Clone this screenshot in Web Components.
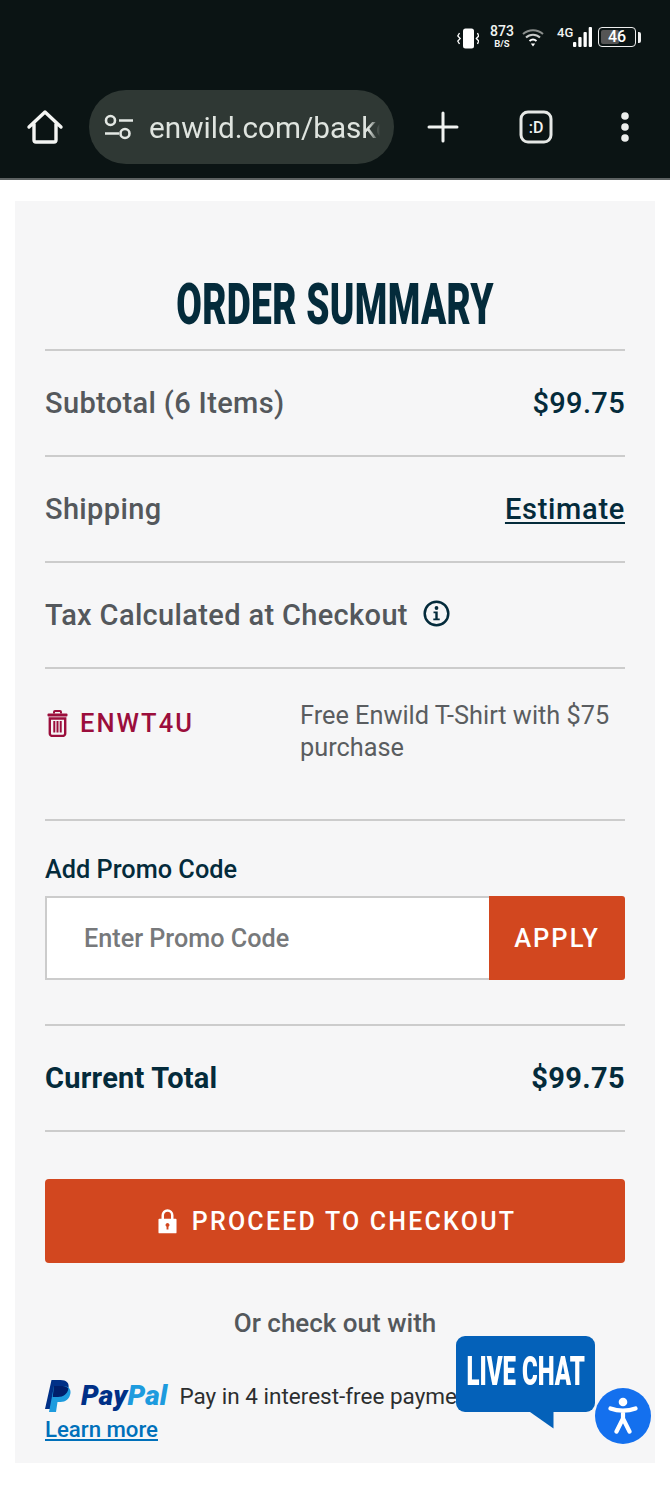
<!DOCTYPE html>
<html lang="en">
<head>
<meta charset="utf-8">
<title>Order summary</title>
<style>
  html, body { margin: 0; background: #fff; }
  body { height: 1500px; position: relative; overflow: hidden; font-family: Roboto, "Liberation Sans", sans-serif; }
</style>
</head>
<body>
<browser-bar url="enwild.com/basket"></browser-bar>
<order-summary>
  <summary-row label="Subtotal (6 Items)" value="$99.75"></summary-row>
  <summary-row label="Shipping" value="Estimate" link></summary-row>
  <summary-row label="Tax Calculated at Checkout" info></summary-row>
  <promo-applied code="ENWT4U">Free Enwild T-Shirt with $75 purchase</promo-applied>
  <promo-form></promo-form>
  <summary-row label="Current Total" value="$99.75" total></summary-row>
  <checkout-block></checkout-block>
</order-summary>
<chat-widgets></chat-widgets>

<script>
'use strict'

// browser chrome + android status bar
customElements.define('browser-bar', class extends HTMLElement {
  connectedCallback() {
    this.attachShadow({ mode: 'open' }).innerHTML = `
      <style>
        :host { display: block; height: 180px; box-sizing: border-box; background: #0b1414; border-bottom: 2px solid #5d6262; color: #f1f3f1; font-family: Roboto, sans-serif; }
        .status { height: 73px; display: flex; align-items: flex-start; justify-content: flex-end; padding: 26px 29px 0 0; box-sizing: border-box; }
        .status svg { display: block; flex: none; }
        .speed { width: 24px; margin-left: 11px; text-align: center; font-weight: 500; line-height: 11px; font-size: 14px; }
        .speed small { display: block; font-size: 9.500px; font-weight: 700; margin-top: 2px; line-height: 9px; }
        .net { width: 16px; margin: 1px 0 0 13px; font-size: 13px; line-height: 11px; font-weight: 500; }
        .batt { position: relative; width: 38px; height: 20px; margin: 1px 0 0 6px; border: 1.500px solid #eee; border-radius: 4px; box-sizing: border-box; padding: 2px; }
        .batt i { display: block; height: 100%; width: 55%; background: #555; border-radius: 2px; }
        .batt b { position: absolute; inset: 0; text-align: center; font-size: 16px; line-height: 17px; font-weight: 500; color: #fff; }
        .cap { width: 3px; height: 11px; margin: 6px 0 0 2px; background: #eee; border-radius: 0 2px 2px 0; }
        .tools { height: 105px; display: flex; align-items: center; padding: 2px 0 0 26px; box-sizing: border-box; }
        .pill { width: 305px; height: 74px; margin-left: 25px; background: #2f3834; border-radius: 37px; display: flex; align-items: center; padding-left: 15px; box-sizing: border-box; }
        .url { width: 231px; margin: 1px 0 0 15px; overflow: hidden; white-space: nowrap; font-size: 29.700px; color: #dfe4df;
               -webkit-mask-image: linear-gradient(90deg, #000 95%, transparent 100%); mask-image: linear-gradient(90deg, #000 95%, transparent 100%); }
        .tools > svg { flex: none; display: block; }
      </style>
      <div class="status">
        <svg width="22" height="21" viewBox="0 0 22 21" style="margin-top:2px"><rect x="6" y="0.500" width="11" height="20" rx="2.500" fill="#fff"/><path d="M2.500 5 .8 8l2.400 2.500L.8 13l1.700 3M20.500 5l1.200 3-2.400 2.500 2.400 2.500-1.200 3" fill="none" stroke="#fff" stroke-width="1.300"/></svg>
        <div class="speed">873<small>B/S</small></div>
        <svg width="22" height="19" viewBox="0 0 22 19" style="margin:2px 0 0 8px"><path d="M1 6a15 15 0 0 1 20 0" fill="none" stroke="#8b8f8d" stroke-width="2"/><path d="M4 9.500a10 10 0 0 1 14 0" fill="none" stroke="#c9cbca" stroke-width="2"/><path d="M7.500 13a5.500 5.500 0 0 1 7 0" fill="none" stroke="#fff" stroke-width="2"/><path d="M8.800 15.500h4.400L11 18.500z" fill="#fff"/></svg>
        <div class="net">4G</div>
        <svg width="19" height="20" viewBox="0 0 19 20" style="margin-top:1px"><g fill="#fff"><rect x="0" y="15" width="3.300" height="5" rx="1"/><rect x="5.300" y="10" width="3.300" height="10" rx="1"/><rect x="10.500" y="5" width="3.300" height="15" rx="1"/><rect x="15.700" y="0" width="3.300" height="20" rx="1"/></g></svg>
        <div class="batt"><i></i><b>46</b></div>
        <div class="cap"></div>
      </div>
      <div class="tools">
        <svg width="38" height="38" viewBox="0 0 38 38"><path d="M3 19 19 4l16 15M8 16v16a2 2 0 0 0 2 2h18a2 2 0 0 0 2-2V16" fill="none" stroke="#f4f5f3" stroke-width="3.400" stroke-linecap="round" stroke-linejoin="round"/></svg>
        <div class="pill">
          <svg width="30" height="26" viewBox="0 0 30 26" style="flex:none"><g fill="none" stroke="#e4e8e4" stroke-width="2.600"><circle cx="6.500" cy="6.500" r="4.500"/><circle cx="21" cy="19.500" r="4.500"/><path d="M15 6.500h14M1 19.500h14"/></g></svg>
          <div class="url">${this.getAttribute('url')}</div>
        </div>
        <svg width="32" height="32" viewBox="0 0 32 32" style="margin-left:33px"><path d="M16 2v28M2 16h28" stroke="#f1f3f1" stroke-width="3" stroke-linecap="round"/></svg>
        <svg width="34" height="34" viewBox="0 0 34 34" style="margin-left:60px"><rect x="2" y="2" width="30" height="30" rx="7" fill="none" stroke="#e6e8e6" stroke-width="3"/><text x="17" y="23" text-anchor="middle" fill="#f1f3f1" font-family="Roboto" font-size="16" font-weight="500">:D</text></svg>
        <svg width="10" height="32" viewBox="0 0 10 32" style="margin-left:67px"><g fill="#eceeec"><circle cx="5" cy="5" r="3.800"/><circle cx="5" cy="16" r="3.800"/><circle cx="5" cy="27" r="3.800"/></g></svg>
      </div>`
  }
})

// grey card with the heading
const orderSummary = document.createElement('template')
orderSummary.innerHTML = `
  <style>
    :host { display: block; margin: 21px 15px 0; height: 1262px; padding: 0 30px; box-sizing: border-box; background: #f6f6f7; overflow: hidden; }
    h2 { margin: 0; height: 150px; box-sizing: border-box; padding-top: 73px; border-bottom: 2px solid #ccc; text-align: center; color: #042b3b;
         font: 900 58px/60px Roboto, sans-serif; white-space: nowrap; }
    /* no Oswald here, squeeze roboto to get the condensed look */
    h2 span { display: inline-block; transform: scaleX(.64); margin: 0 -100px; letter-spacing: .5px; }
  </style>
  <h2><span>ORDER SUMMARY</span></h2>
  <slot></slot>`
customElements.define('order-summary', class extends HTMLElement {
  constructor() {
    super()
    this.attachShadow({ mode: 'open' }).appendChild(orderSummary.content.cloneNode(true))
  }
})

customElements.define('summary-row', class extends HTMLElement {
  connectedCallback() {
    const value = this.getAttribute('value')
    const isLink = this.hasAttribute('link')
    this.attachShadow({ mode: 'open' }).innerHTML = `
      <style>
        :host { display: flex; height: 106px; box-sizing: border-box; border-bottom: 2px solid #ccc; align-items: center; justify-content: space-between;
                font: 500 29px/36px Roboto, sans-serif; letter-spacing: .35px; color: #54585c; }
        :host([total]) { color: #042b3b; font-weight: 700; letter-spacing: .25px; }
        .val { color: #042b3b; font-weight: 500; }
        :host([total]) .val { font-weight: 700; letter-spacing: .35px; }
        a { color: #042b3b; text-decoration: underline; text-underline-offset: 3px; letter-spacing: .7px; }
        .label { display: flex; align-items: center; gap: 15px; }
        svg { display: block; }
      </style>
      <div class="label">${this.getAttribute('label')}${this.hasAttribute('info') ? `
        <svg width="27" height="27" viewBox="0 0 27 27" style="margin-top:-4px"><circle cx="13.500" cy="13.500" r="11.800" fill="none" stroke="#042b3b" stroke-width="2.500"/><circle cx="13.500" cy="8" r="1.900" fill="#042b3b"/><path d="M10.500 11.500h4.200v7h2v1.800h-6.400v-1.800h2v-5.200h-1.800z" fill="#042b3b"/></svg>` : ''}</div>
      ${value ? `<div class="val">${isLink ? `<a href="#">${value}</a>` : value}</div>` : ''}`
  }
})

customElements.define('promo-applied', class extends HTMLElement {
  connectedCallback() {
    this.attachShadow({ mode: 'open' }).innerHTML = `
      <style>
        :host { display: grid; grid-template-columns: 255px 1fr; height: 152px; box-sizing: border-box; border-bottom: 2px solid #ccc; padding-top: 30px; font-family: Roboto, sans-serif; }
        .code { display: flex; align-items: center; gap: 12px; height: 48px; padding-left: 2px; color: #9b0e3c; font-weight: 500; font-size: 25.500px; letter-spacing: 2px; }
        .note { color: #5a5d60; font-size: 25.300px; line-height: 32px; margin-top: 1px; }
        svg { display: block; flex: none; }
      </style>
      <div class="code">
        <svg width="21" height="27" viewBox="0 0 21 27"><path d="M7 3.500V2a1 1 0 0 1 1-1h5a1 1 0 0 1 1 1v1.500" fill="none" stroke="#9b0e3c" stroke-width="2"/><rect x="0.500" y="3.500" width="20" height="3" rx="1" fill="#9b0e3c"/><path d="M2.800 8.500h15.400v15a2.500 2.500 0 0 1-2.500 2.500h-10.400a2.500 2.500 0 0 1-2.500-2.500z" fill="none" stroke="#9b0e3c" stroke-width="2.400"/><path d="M7.300 11v11.500M10.500 11v11.500M13.700 11v11.500" stroke="#9b0e3c" stroke-width="2"/></svg>
        ${this.getAttribute('code')}
      </div>
      <div class="note"><slot></slot></div>`
  }
})

customElements.define('promo-form', class extends HTMLElement {
  connectedCallback() {
    this.attachShadow({ mode: 'open' }).innerHTML = `
      <style>
        :host { display: block; height: 205px; box-sizing: border-box; border-bottom: 2px solid #ccc; padding-top: 33px; font-family: Roboto, sans-serif; }
        label { display: block; font: 500 25.300px/32px Roboto, sans-serif; color: #042b3b; margin-bottom: 10px; }
        .field { display: flex; height: 84px; }
        .input { flex: 1; background: #fff; border: 2px solid #ccc; border-right: 0; box-sizing: border-box; display: flex; align-items: center; padding-left: 37px; color: #77797b; font-weight: 500; font-size: 25.200px; }
        .btn { width: 136px; background: #d2471f; color: #fff; display: flex; align-items: center; justify-content: center; font-weight: 500; font-size: 25.500px; letter-spacing: 2px; border-radius: 0 3px 3px 0; }
      </style>
      <label>Add Promo Code</label>
      <div class="field"><div class="input">Enter Promo Code</div><div class="btn">APPLY</div></div>`
  }
})

customElements.define('checkout-block', class extends HTMLElement {
  connectedCallback() {
    this.attachShadow({ mode: 'open' }).innerHTML = `
      <style>
        :host { display: block; padding-top: 47px; font-family: Roboto, sans-serif; }
        .btn { height: 84px; padding-left: 4px; box-sizing: border-box; background: #d2471f; border-radius: 4px; color: #fff; display: flex; align-items: center; justify-content: center; gap: 15px; font-weight: 500; font-size: 25px; letter-spacing: 2.200px; }
        .or { text-align: center; color: #54585c; font-weight: 500; font-size: 26px; line-height: 32px; margin-top: 44px; }
        .pp { display: flex; align-items: center; margin-top: 39px; height: 36px; white-space: nowrap; font-size: 22.500px; color: #2c2e2f; }
        .word { font: italic 900 28px/36px Roboto, sans-serif; margin: 0 12px 0 10px; letter-spacing: .2px; }
        .pay { color: #003087; } .pal { color: #1d9bde; }
        svg { display: block; flex: none; }
        a { display: block; color: #0070ba; font-size: 22.200px; font-weight: 500; line-height: 30px; margin-top: 0; text-decoration: underline; text-underline-offset: 2px; }
      </style>
      <div class="btn">
        <svg width="19" height="26" viewBox="0 0 20 26"><path d="M5 11V7a5 5 0 0 1 10 0v4" fill="none" stroke="#fff" stroke-width="2.600"/><path fill-rule="evenodd" d="M1.500 10.500h17a1 1 0 0 1 1 1V25a1 1 0 0 1-1 1h-17a1 1 0 0 1-1-1V11.500a1 1 0 0 1 1-1zM10 15a2.200 2.200 0 0 0-1 4.100V22h2v-2.900A2.200 2.200 0 0 0 10 15z" fill="#fff"/></svg>
        PROCEED TO CHECKOUT
      </div>
      <div class="or">Or check out with</div>
      <div class="pp">
        <svg width="26" height="32" viewBox="0 0 26 32"><path d="M6.500 0h9c6 0 9 3 8 8-1 6-5 9-10.500 9H9l-2 12H0z" fill="#003087"/><path d="M9 6h8.500c5.500 0 8.500 2.500 8 7-.8 6-5 9-10 9h-3l-1.500 10H4z" fill="#1d9bde"/><path d="M7.700 17H13c5.500 0 9.500-3 10.400-8.500-.9-.7-2.500-2.500-5.900-2.500H9z" fill="#001f6b"/></svg>
        <span class="word"><span class="pay">Pay</span><span class="pal">Pal</span></span>
        <span>Pay in 4 interest-free payments</span>
      </div>
      <a href="#">Learn more</a>`
  }
})

// floating live chat + accessibility buttons, sit on top of the page
customElements.define('chat-widgets', class extends HTMLElement {
  connectedCallback() {
    this.attachShadow({ mode: 'open' }).innerHTML = `
      <style>
        :host { display: block; position: absolute; left: 456px; top: 1336px; width: 196px; height: 108px; }
        .chat { position: absolute; left: 0; top: 0; width: 139px; height: 76px; background: #0461b9; border-radius: 9px; color: #fff; text-align: center; white-space: nowrap;
                font: 900 40px/72px Roboto, sans-serif; }
        .chat span { display: inline-block; transform: scaleX(.6); margin: 0 -50px; }
        .tail { position: absolute; left: 74px; top: 76px; }
        .a11y { position: absolute; left: 139px; top: 52px; width: 56px; height: 56px; border-radius: 50%; background: #1470ee; display: flex; align-items: center; justify-content: center; }
        svg { display: block; }
      </style>
      <div class="chat"><span>LIVE CHAT</span></div>
      <svg class="tail" width="24" height="17" viewBox="0 0 24 17"><path d="M0 0h23.500v16.500z" fill="#0461b9"/></svg>
      <div class="a11y">
        <svg width="30" height="38" viewBox="0 0 30 38"><circle cx="15" cy="5" r="4.300" fill="#fff"/><path d="M2.500 11.500c4 1.500 8 2.200 12.500 2.200s8.500-.7 12.500-2.200M15 14v8M15 21.500 8.500 34.500M15 21.500l6.500 13" fill="none" stroke="#fff" stroke-width="4.200" stroke-linecap="round" stroke-linejoin="round"/></svg>
      </div>`
  }
})
</script>
</body>
</html>
